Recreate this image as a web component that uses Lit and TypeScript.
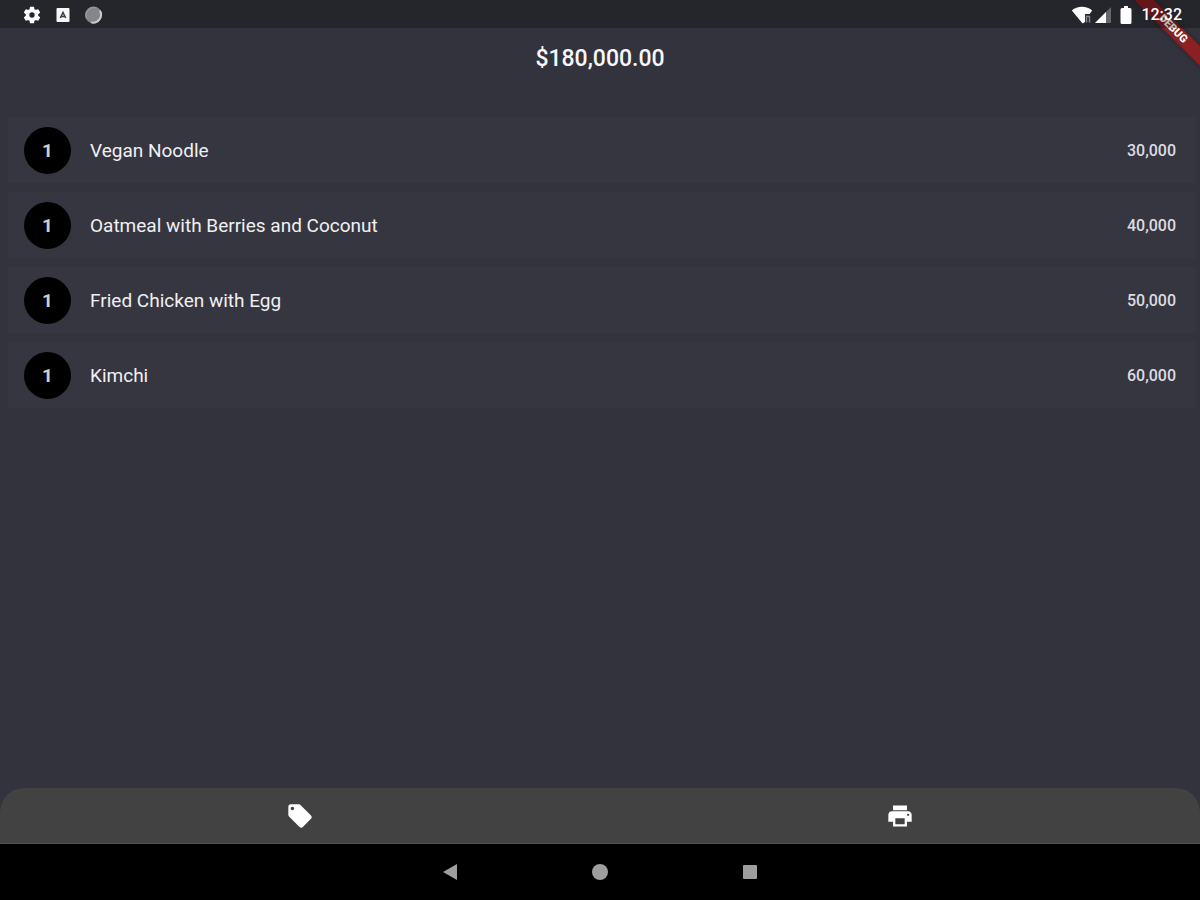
import { LitElement, html, css } from "lit";
import { customElement, state } from "lit/decorators.js";

interface OrderLine {
  quantity: number;
  name: string;
  price: number;
}

@customElement("status-bar")
class StatusBar extends LitElement {
  static styles = css`
    :host {
      display: flex;
      align-items: center;
      justify-content: space-between;
      position: relative;
      z-index: 1;
      height: 28px;
      padding: 0 18px 0 22px;
      background: rgba(0, 0, 0, 0.27);
      color: #fff;
    }
    .group {
      display: flex;
      align-items: center;
      padding-top: 2px;
    }
    .left {
      gap: 11px;
    }
    .signal {
      margin-left: 2px;
    }
    .battery {
      margin-left: 9px;
    }
    .time {
      margin-left: 9px;
      font-size: 16px;
      line-height: 20px;
      font-weight: 500;
    }
    svg {
      display: block;
    }
  `;

  render() {
    return html`
      <div class="group left">
        <svg width="20" height="20" viewBox="0 0 24 24" fill="currentColor" aria-hidden="true">
          <path d="M19.43 12.98c.04-.32.07-.64.07-.98s-.03-.66-.07-.98l2.11-1.65c.19-.15.24-.42.12-.64l-2-3.46c-.12-.22-.39-.3-.61-.22l-2.49 1c-.52-.4-1.08-.73-1.69-.98l-.38-2.65C14.46 2.18 14.25 2 14 2h-4c-.25 0-.46.18-.49.42l-.38 2.65c-.61.25-1.17.59-1.69.98l-2.49-1c-.23-.09-.49 0-.61.22l-2 3.46c-.13.22-.07.49.12.64l2.11 1.65c-.04.32-.07.65-.07.98s.03.66.07.98l-2.11 1.65c-.19.15-.24.42-.12.64l2 3.46c.12.22.39.3.61.22l2.49-1c.52.4 1.08.73 1.69.98l.38 2.65c.03.24.24.42.49.42h4c.25 0 .46-.18.49-.42l.38-2.65c.61-.25 1.17-.59 1.69-.98l2.49 1c.23.09.49 0 .61-.22l2-3.46c.12-.22.07-.49-.12-.64l-2.11-1.65zM12 15.2a3.2 3.2 0 1 1 0-6.4 3.2 3.2 0 0 1 0 6.4z" />
        </svg>
        <svg width="20" height="20" viewBox="0 0 20 20" aria-hidden="true">
          <rect x="3.5" y="3" width="13" height="14" rx="1" fill="#f8f8f8" />
          <path d="M7.3 13 10 7.400l2.700 5.600M8.200 11.400h3.600" fill="none" stroke="#3a3a42" stroke-width="1.500" />
        </svg>
        <svg width="20" height="20" viewBox="0 0 20 20" aria-hidden="true">
          <circle cx="9.500" cy="10" r="8.500" fill="#85858a" />
          <path d="M15.800 5.500A8 8 0 0 1 7 17.400" fill="none" stroke="#c9c9cc" stroke-width="2" />
          <path d="M2.300 13A8 8 0 0 1 11.500 2.600" fill="none" stroke="#a0a0a4" stroke-width="1" />
        </svg>
      </div>
      <div class="group">
        <svg width="22" height="18" viewBox="0 0 22 18" aria-hidden="true">
          <path d="M0.800 4.400C6.500-.3 15.500-.3 21.200 4.400L18.600 8H14V16L11.600 17.500Z" fill="#fff" />
          <path d="M15.500 9.500V16.500M15.500 10.500H18.500V16.500" fill="none" stroke="#85858c" stroke-width="1.500" />
        </svg>
        <svg class="signal" width="16" height="16" viewBox="0 0 16 16" aria-hidden="true">
          <path d="M0 16 16 0V16Z" fill="#66666d" />
          <path d="M0 16 11 5V16Z" fill="#fff" />
        </svg>
        <svg class="battery" width="12" height="18" viewBox="0 0 12 18" aria-hidden="true">
          <path d="M4 0H8V2H10Q11.500 2 11.500 3.500V16.500Q11.500 18 10 18H2Q.5 18 .5 16.500V3.500Q.5 2 2 2H4Z" fill="#fff" />
        </svg>
        <span class="time">12:32</span>
      </div>
    `;
  }
}

@customElement("order-list")
class OrderList extends LitElement {
  static properties = { lines: { attribute: false } };
  declare lines: OrderLine[];

  static styles = css`
    :host {
      display: block;
    }
    .list {
      display: flex;
      flex-direction: column;
      gap: 9px;
      margin: 0;
      padding: 0 4px 0 8px;
      list-style: none;
    }
    .row {
      display: flex;
      align-items: center;
      gap: 19px;
      height: 66px;
      padding: 0 20px 0 16px;
      box-sizing: border-box;
      background: #363640;
    }
    .quantity {
      display: grid;
      place-items: center;
      flex: none;
      width: 47px;
      height: 47px;
      border-radius: 50%;
      background: #000;
      color: #d0d0d0;
      font-size: 19px;
      font-weight: 700;
    }
    .name {
      flex: 1;
      font-size: 19px;
      color: #f0f0f2;
    }
    .price {
      font-size: 16px;
      font-weight: 500;
      color: #dcdce0;
    }
  `;

  render() {
    return html`
      <ul class="list">
        ${this.lines.map(
          (line) => html`
            <li class="row">
              <span class="quantity">${line.quantity}</span>
              <span class="name">${line.name}</span>
              <span class="price">${line.price.toLocaleString("en-US")}</span>
            </li>
          `
        )}
      </ul>
    `;
  }
}

@customElement("app-root")
class AppRoot extends LitElement {
  @state() private lines: OrderLine[] = [
    { quantity: 1, name: "Vegan Noodle", price: 30000 },
    { quantity: 1, name: "Oatmeal with Berries and Coconut", price: 40000 },
    { quantity: 1, name: "Fried Chicken with Egg", price: 50000 },
    { quantity: 1, name: "Kimchi", price: 60000 },
  ];

  static styles = css`
    :host {
      display: flex;
      flex-direction: column;
      position: relative;
      min-height: 100vh;
      background: #33333d;
      color: #f8f8fa;
      font-family: Roboto, "Liberation Sans", sans-serif;
    }
    .total {
      margin: 0;
      padding: 17px 0 44px;
      font-size: 23px;
      line-height: 28px;
      font-weight: 500;
      text-align: center;
    }
    .content {
      flex: 1;
    }
    .actions {
      display: grid;
      grid-template-columns: 1fr 1fr;
      height: 56px;
      box-sizing: border-box;
      border-bottom: 1px solid #505050;
      border-radius: 24px 24px 0 0;
      background: #424242;
    }
    .navigation {
      display: flex;
      justify-content: center;
      height: 56px;
      background: #000;
    }
    button {
      display: grid;
      place-items: center;
      padding: 0;
      border: 0;
      background: none;
      color: #fff;
    }
    .navigation button {
      width: 150px;
      color: #9e9e9e;
    }
    svg {
      display: block;
    }
    .corner {
      position: absolute;
      top: 0;
      right: 0;
      width: 80px;
      height: 80px;
      overflow: hidden;
      pointer-events: none;
    }
    .banner {
      position: absolute;
      top: 22px;
      right: -48px;
      width: 150px;
      height: 14px;
      transform: rotate(45deg);
      background: rgba(183, 22, 22, 0.68);
      box-shadow: 0 0 6px rgba(0, 0, 0, 0.3);
      color: #fff;
      font-size: 11px;
      line-height: 14px;
      font-weight: 900;
      text-align: center;
    }
  `;

  render() {
    const total = this.lines.reduce((sum, line) => sum + line.quantity * line.price, 0);
    const label = total.toLocaleString("en-US", { style: "currency", currency: "USD" });
    return html`
      <status-bar></status-bar>
      <h1 class="total">${label}</h1>
      <main class="content"><order-list .lines=${this.lines}></order-list></main>
      <div class="actions">
        <button type="button" aria-label="Discount">
          <svg width="28" height="28" viewBox="0 0 24 24" fill="currentColor">
            <path d="M21.410 11.580l-9-9C12.050 2.220 11.550 2 11 2H4c-1.100 0-2 .9-2 2v7c0 .55.22 1.050.59 1.420l9 9c.36.36.86.58 1.410.58.55 0 1.050-.22 1.410-.59l7-7c.37-.36.59-.86.59-1.410 0-.55-.23-1.060-.59-1.420zM5.500 7C4.670 7 4 6.330 4 5.500S4.670 4 5.500 4 7 4.670 7 5.500 6.330 7 5.500 7z" />
          </svg>
        </button>
        <button type="button" aria-label="Print">
          <svg width="28" height="28" viewBox="0 0 24 24" fill="currentColor">
            <path d="M19 8H5c-1.660 0-3 1.340-3 3v6h4v4h12v-4h4v-6c0-1.660-1.340-3-3-3zm-3 11H8v-5h8v5zm3-7c-.55 0-1-.45-1-1s.45-1 1-1 1 .45 1 1-.45 1-1 1zm-1-9H6v4h12V3z" />
          </svg>
        </button>
      </div>
      <nav class="navigation">
        <button type="button" aria-label="Back">
          <svg width="18" height="18" viewBox="0 0 18 18" fill="currentColor"><path d="M2 9 16 1V17Z" /></svg>
        </button>
        <button type="button" aria-label="Home">
          <svg width="18" height="18" viewBox="0 0 18 18" fill="currentColor"><circle cx="9" cy="9" r="8" /></svg>
        </button>
        <button type="button" aria-label="Recent apps">
          <svg width="18" height="18" viewBox="0 0 18 18" fill="currentColor"><rect x="2" y="2" width="14" height="14" rx="1" /></svg>
        </button>
      </nav>
      <div class="corner"><div class="banner">DEBUG</div></div>
    `;
  }
}
